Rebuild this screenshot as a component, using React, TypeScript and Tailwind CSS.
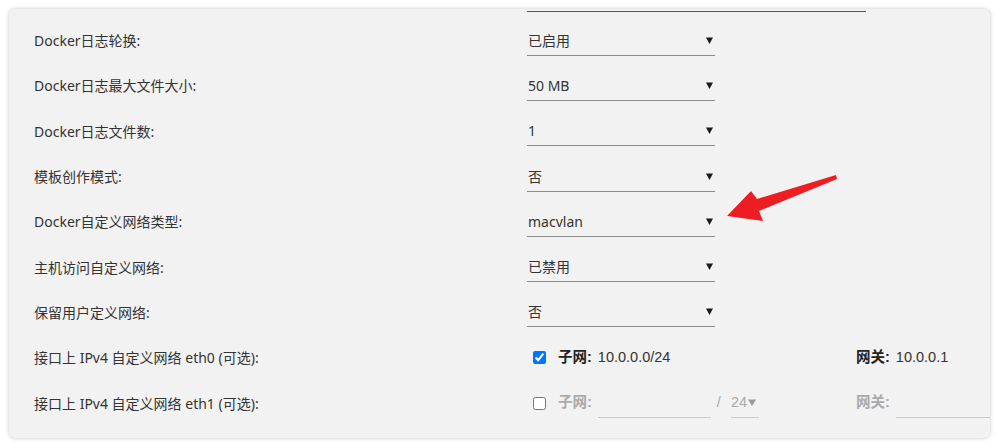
const labelFont = "font-['Noto_Sans','Noto_Sans_CJK_SC',sans-serif]";
const netFont = "font-['Liberation_Sans','Noto_Sans_CJK_SC',sans-serif]";

const selects = [
  { label: "Docker日志轮换:", value: "已启用" },
  { label: "Docker日志最大文件大小:", value: "50 MB" },
  { label: "Docker日志文件数:", value: "1" },
  { label: "模板创作模式:", value: "否" },
  { label: "Docker自定义网络类型:", value: "macvlan" },
  { label: "主机访问自定义网络:", value: "已禁用" },
  { label: "保留用户定义网络:", value: "否" },
];

function Caret({ color = "#1a1a1a", w = 7 }: { color?: string; w?: number }) {
  return (
    <svg width={w} height="7" viewBox={`0 0 ${w} 7`} className="shrink-0">
      <polygon points={`0,0.5 ${w},0.5 ${w / 2},7`} fill={color} />
    </svg>
  );
}

function SelectBox({ value }: { value: string }) {
  return (
    <div className="shrink-0 w-[188px] h-[30px] flex items-center justify-between border-b border-[#8c8c8c] pl-[1px] pr-[2px] text-[14px] text-[#333]">
      <span>{value}</span>
      <Caret />
    </div>
  );
}

function Row({ label, children }: { label: string; children: React.ReactNode }) {
  return (
    <div className="h-[45.3px] flex items-center">
      <div className="shrink-0 w-[493px] text-[14px] text-[#333]">{label}</div>
      {children}
    </div>
  );
}

export default function App() {
  return (
    <div className={`w-[1000px] h-[448px] bg-white overflow-hidden pt-[9px] pl-[9px] ${labelFont}`}>
      <div className="relative w-[981px] h-[429px] rounded-[6px] bg-[#f2f2f2] shadow-[0_0_4px_rgba(0,0,0,0.22)] overflow-hidden">
        {/* tail end of the field above */}
        <div className="ml-[518px] mt-[2px] w-[339px] border-t border-[#555]" />

        <div className="mt-[6px] px-[25px]">
          {selects.map((s) => (
            <Row key={s.label} label={s.label}>
              <SelectBox value={s.value} />
            </Row>
          ))}

          <Row label="接口上 IPv4 自定义网络 eth0 (可选):">
            <div className={`shrink-0 flex items-center whitespace-nowrap text-[14.5px] text-[#333] ${netFont}`}>
              <div className="shrink-0 w-[329px] flex items-center">
                <input type="checkbox" defaultChecked readOnly className="shrink-0 ml-[6px] w-[13px] h-[13px]" />
                <span className="ml-[12px] font-bold text-[#222]">子网:</span>
                <span className="ml-[6px]">10.0.0.0/24</span>
              </div>
              <span className="font-bold text-[#222]">网关:</span>
              <span className="ml-[6px]">10.0.0.1</span>
            </div>
          </Row>

          <Row label="接口上 IPv4 自定义网络 eth1 (可选):">
            <div className={`shrink-0 flex items-center whitespace-nowrap text-[14.5px] text-[#aaa] ${netFont}`}>
              <div className="shrink-0 w-[329px] flex items-center">
                <input type="checkbox" readOnly className="shrink-0 ml-[6px] w-[13px] h-[13px]" />
                <span className="ml-[12px] font-bold">子网:</span>
                <div className="shrink-0 ml-[6px] w-[113px] h-[30px] border-b border-[#ccc]" />
                <span className="ml-[6px]">/</span>
                <div className="shrink-0 ml-[10px] w-[28px] h-[30px] flex items-center gap-[1px] border-b border-[#ccc]">
                  <span>24</span>
                  <Caret color="#999" w={8} />
                </div>
              </div>
              <span className="font-bold">网关:</span>
              <div className="shrink-0 ml-[6px] w-[200px] h-[30px] border-b border-[#ccc]" />
            </div>
          </Row>
        </div>

        {/* red callout arrow */}
        <svg className="absolute left-0 top-0 pointer-events-none" width="981" height="429" viewBox="9 9 981 429">
          <polygon
            points="836,175 757,199 751,191 727,216 763,221 759,211 837,179"
            fill="#ee1d24"
          />
        </svg>
      </div>
    </div>
  );
}
